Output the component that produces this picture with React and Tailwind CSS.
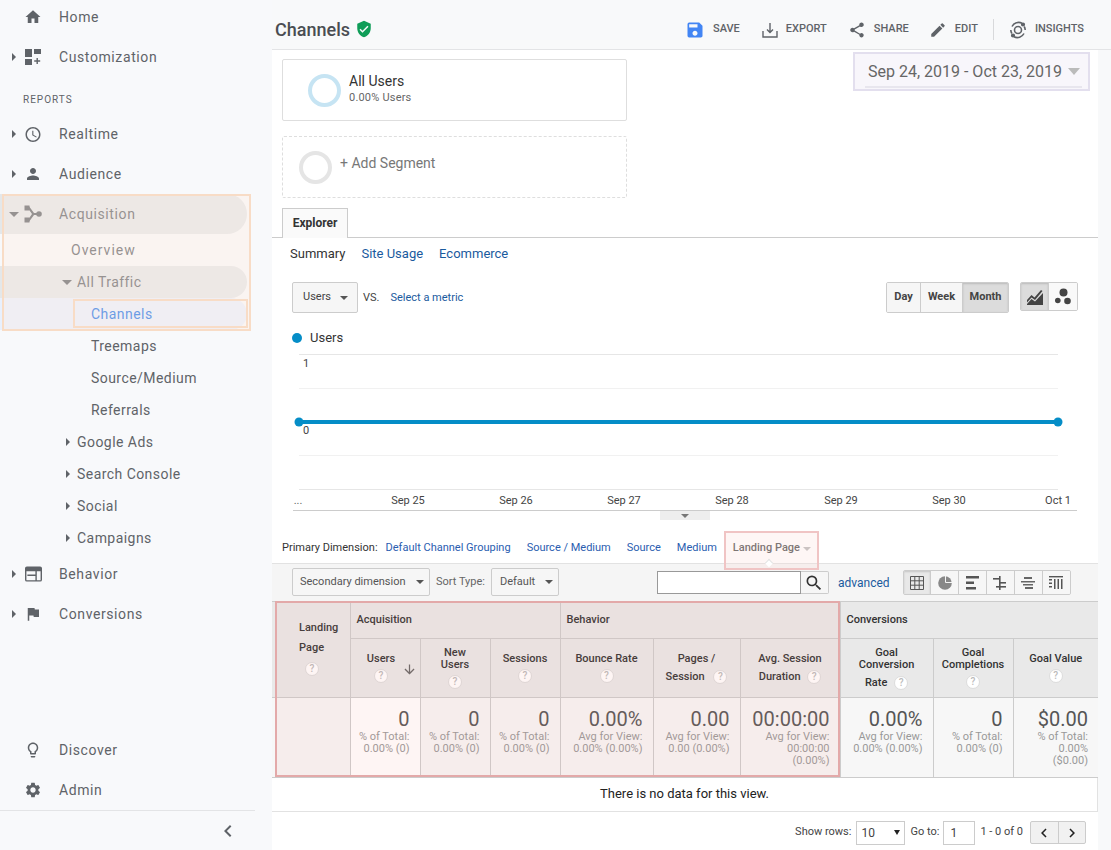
import {
  MdHome, MdAccessTime, MdPerson, MdSave, MdShare, MdEdit, MdFlag, MdSettings,
  MdLightbulbOutline, MdVerifiedUser, MdChevronLeft, MdSearch, MdArrowDownward,
} from 'react-icons/md'

function Caret({ open, className = '' }) {
  if (open) return <span className={`block h-0 w-0 border-x-[5px] border-t-[5px] border-x-transparent border-t-[#5f6368] ${className}`} />
  return <span className={`block h-0 w-0 border-y-[4px] border-l-[4px] border-y-transparent border-l-[#5f6368] ${className}`} />
}

function DashIcon() {
  return (
    <svg viewBox="0 0 16 16" className="h-4 w-4 fill-[#5f6368]">
      <rect x="0" y="0" width="7" height="8" /><rect x="9" y="0" width="7" height="5" />
      <rect x="0" y="10" width="7" height="6" /><path d="M11.5 9h1.4v2.3h2.3v1.4h-2.3V15h-1.4v-2.3H9.2v-1.4h2.3z" />
    </svg>
  )
}

function AcqIcon() {
  return (
    <svg viewBox="0 0 18 18" className="h-[18px] w-[18px] fill-[#5f6368]">
      <rect x="0.500" y="0.500" width="5" height="5" /><rect x="0.500" y="12.500" width="5" height="5" /><circle cx="15" cy="9" r="2.800" />
      <path d="M3.500 2.500l1.500-1.200L10 8h4v2h-4l-5 6.700-1.500-1.200L8 9z" />
    </svg>
  )
}

function BehaviorIcon() {
  return (
    <svg viewBox="0 0 18 16" className="h-4 w-[17px]">
      <path fillRule="evenodd" className="fill-[#5f6368]" d="M2 0h14a2 2 0 0 1 2 2v12a2 2 0 0 1-2 2H2a2 2 0 0 1-2-2V2a2 2 0 0 1 2-2zM1.500 5v9.500h9.500V10H2.500V8.500H11V5zM12.500 5v9.500h4V5z" />
    </svg>
  )
}

function NavItem({ icon, label, arrow, open }) {
  return (
    <div className="flex h-10 items-center">
      <span className="flex w-[24px] justify-center pl-[3px]">
        {arrow && <Caret open={open} />}
      </span>
      <span className="flex w-[18px] justify-center">{icon}</span>
      <span className="ml-[17px] text-[14px] tracking-[0.6px] text-[#5f6368]">{label}</span>
    </div>
  )
}

function SubItem({ label, indent = 'pl-[91px]', arrow, wide }) {
  return (
    <div className={`flex h-8 items-center ${indent} text-[14px] ${wide ? 'tracking-[1px]' : 'tracking-[0.45px]'} text-[#5f6368]`}>
      {arrow && <Caret className="mr-[7px]" />}
      {label}
    </div>
  )
}

function Sidebar() {
  return (
    <aside className="relative h-[850px] w-[272px] shrink-0 bg-[#f8f9fb]">
      <div className="-mt-[3px] flex h-[813px] flex-col">
        <NavItem icon={<MdHome size={20} color="#5f6368" />} label="Home" />
        <NavItem icon={<DashIcon />} label="Customization" arrow />
        <div className="flex h-[37px] items-center pl-[23px] pt-[7px] text-[10px] tracking-[1px] text-[#5f6368]">REPORTS</div>
        <NavItem icon={<MdAccessTime size={21} color="#5f6368" />} label="Realtime" arrow />
        <NavItem icon={<MdPerson size={20} color="#5f6368" />} label="Audience" arrow />
        <div className="w-[247px] rounded-r-[20px] bg-[#e4e7e9]">
          <NavItem icon={<AcqIcon />} label="Acquisition" arrow open />
        </div>
        <SubItem label="Overview" indent="pl-[71px]" wide />
        <div className="flex h-8 w-[247px] items-center rounded-r-[16px] bg-[#e4e7e9] pl-[62px] text-[14px] tracking-[0.45px] text-[#5f6368]">
          <Caret open className="mr-[5px]" />All Traffic
        </div>
        <div className="flex h-8 w-[247px] items-center rounded-r-[16px] bg-[#e8f0fe] pl-[91px] text-[14px] tracking-[0.45px] text-[#1a73e8]">Channels</div>
        <SubItem label="Treemaps" />
        <SubItem label="Source/Medium" />
        <SubItem label="Referrals" />
        <SubItem label="Google Ads" indent="pl-[66px]" arrow />
        <SubItem label="Search Console" indent="pl-[66px]" arrow />
        <SubItem label="Social" indent="pl-[66px]" arrow />
        <SubItem label="Campaigns" indent="pl-[66px]" arrow />
        <NavItem icon={<BehaviorIcon />} label="Behavior" arrow />
        <NavItem icon={<MdFlag size={20} color="#5f6368" />} label="Conversions" arrow />
        <div className="flex-1" />
        <NavItem icon={<MdLightbulbOutline size={20} color="#5f6368" />} label="Discover" />
        <NavItem icon={<MdSettings size={20} color="#5f6368" />} label="Admin" />
      </div>
      <div className="flex h-10 w-[255px] items-center justify-end border-t border-[#e3e4e6] pr-[15px]">
        <MdChevronLeft size={24} color="#5f6368" />
      </div>
      {/* orange highlight over the active nav group */}
      <div className="absolute left-[2px] top-[194px] h-[137px] w-[249px] border-2 border-[#f8dcc6] bg-[#feece0]/35" />
      <div className="absolute left-[73px] top-[299px] h-[29px] w-[175px] border-2 border-[#f8dcc6]" />
    </aside>
  )
}

function ExportIcon() {
  return (
    <svg viewBox="0 0 16 16" className="h-4 w-4 fill-none stroke-[#5f6368] stroke-[1.4]">
      <path d="M1 9v6h14V9M8 1v9M5 7.500l3 3 3-3" />
    </svg>
  )
}

function InsightsIcon() {
  return (
    <svg viewBox="0 0 18 18" className="h-[18px] w-[18px] fill-none stroke-[#5f6368] stroke-[1.6]">
      <path d="M3 5.500A7.500 7.500 0 0 1 13 2.200M15 12.500A7.500 7.500 0 0 1 5 15.800M1.800 9a7.500 7.500 0 0 0 1 3.500M16.200 9a7.500 7.500 0 0 0-1-3.500" />
      <circle cx="9" cy="9" r="3.500" />
      <circle cx="14" cy="3.500" r="1.300" className="fill-[#5f6368]" /><circle cx="4" cy="14.500" r="1.300" className="fill-[#5f6368]" />
    </svg>
  )
}

function HeaderAction({ icon, label, className }) {
  return (
    <span className={`flex items-center ${className}`}>
      {icon}
      <span className="ml-[8px] text-[11px] font-medium text-[#5f6368]">{label}</span>
    </span>
  )
}

function Header() {
  return (
    <header className="flex h-[50px] items-center border-b border-[#e3e4e6] bg-[#f8f9fa] pl-[3px] pt-[9px]">
      <h1 className="text-[18px] font-medium text-[#4a4d52]">Channels</h1>
      <MdVerifiedUser size={18} color="#0f9d58" className="ml-[5px]" />
      <div className="ml-auto flex items-center pr-[27px] pt-[1px]">
        <HeaderAction icon={<MdSave size={20} color="#4285f4" />} label="SAVE" />
        <HeaderAction icon={<ExportIcon />} label="EXPORT" className="ml-[22px]" />
        <HeaderAction icon={<MdShare size={18} color="#5f6368" />} label="SHARE" className="ml-[21px]" />
        <HeaderAction icon={<MdEdit size={18} color="#5f6368" />} label="EDIT" className="ml-[20px]" />
        <span className="mx-[15px] h-[21px] w-px bg-[#d8d9db]" />
        <HeaderAction icon={<InsightsIcon />} label="INSIGHTS" />
      </div>
    </header>
  )
}

function Segments() {
  return (
    <div className="relative h-[158px] pl-[10px] pt-[9px]">
      <div className="flex h-[62px] w-[345px] items-start rounded-[2px] border border-[#dedede] pl-[25px]">
        <span className="mt-[14px] h-[33px] w-[33px] rounded-full border-[4px] border-[#c6e4f3]" />
        <div className="ml-[8px] mt-[13px]">
          <div className="text-[14px] leading-[16px] text-[#333]">All Users</div>
          <div className="mt-px text-[11px] leading-[16px] tracking-[0.2px] text-[#666]">0.00% Users</div>
        </div>
      </div>
      <div className="mt-[15px] flex h-[62px] w-[345px] items-start rounded-[2px] border border-dashed border-[#dedede] pl-[16px]">
        <span className="mt-[14px] h-[33px] w-[33px] rounded-full border-[4px] border-[#e5e5e5]" />
        <span className="ml-[8px] mt-[17px] text-[14px] leading-[18px] text-[#777]">+ Add Segment</span>
      </div>
      <div className="absolute right-[8px] top-[2px] flex h-[39px] w-[237px] items-center border-2 border-[#e3dfee] bg-[#f8f6fb] pl-[13px]">
        <span className="text-[16px] text-[#666]">Sep 24, 2019 - Oct 23, 2019</span>
        <span className="ml-[6px] h-0 w-0 border-x-[6px] border-t-[7px] border-x-transparent border-t-[#bbb]" />
        <span className="absolute bottom-[1px] left-[10px] right-[6px] h-[2px] bg-[#e8e6ee]" />
      </div>
    </div>
  )
}

function Tabs() {
  return (
    <>
      <div className="h-[30px] border-b border-[#ccc] pl-[10px]">
        <div className="flex h-[30px] w-[66px] items-center justify-center border border-b-0 border-[#ccc] bg-[#fafafa] pb-[2px] text-[12px] font-bold text-[#333]">Explorer</div>
      </div>
      <div className="flex h-[32px] items-center gap-[16px] pl-[18px] text-[13px]">
        <span className="text-[#333]">Summary</span>
        <span className="text-[#1a5a9e]">Site Usage</span>
        <span className="text-[#1a5a9e]">Ecommerce</span>
      </div>
    </>
  )
}

function SegBtn({ label, active, className = '' }) {
  return (
    <span className={`flex h-full items-center justify-center text-[11px] font-bold text-[#444] ${active ? 'bg-[#dcdcdc] shadow-[inset_0_1px_2px_rgba(0,0,0,0.15)]' : 'bg-[#f6f6f6]'} ${className}`}>{label}</span>
  )
}

function ChartControls() {
  return (
    <div className="mt-[12px] flex h-[31px] items-start pl-[20px] pr-[20px]">
      <span className="flex h-[31px] w-[66px] items-center rounded-[2px] border border-[#ccc] bg-[#f6f6f6] pl-[10px] text-[11px] text-[#444]">
        Users<span className="ml-[9px] h-0 w-0 border-x-[4px] border-t-[4px] border-x-transparent border-t-[#555]" />
      </span>
      <span className="ml-[5px] mt-[8px] text-[11px] text-[#444]">VS.</span>
      <span className="ml-[11px] mt-[8px] text-[11px] text-[#1a5a9e]">Select a metric</span>
      <div className="ml-auto flex h-[31px] overflow-hidden rounded-[2px] border border-[#ccc]">
        <SegBtn label="Day" className="w-[34px] border-r border-[#ccc]" />
        <SegBtn label="Week" className="w-[42px] border-r border-[#ccc]" />
        <SegBtn label="Month" active className="w-[45px]" />
      </div>
      <div className="ml-[11px] flex h-[29px] w-[58px] overflow-hidden rounded-[2px] border border-[#ccc]">
        <span className="flex w-[28px] items-center justify-center border-r border-[#ccc] bg-[#dcdcdc] shadow-[inset_0_1px_2px_rgba(0,0,0,0.15)]">
          <svg viewBox="0 0 16 16" className="h-4 w-4 fill-[#444]"><path d="M0 11l4.500-5 3 2.500L14 1l1.500 1L8 11 4.500 8.500 0 13.500zM0 16v-1l4.500-5 3.500 2.500 8-8.500v12z" /></svg>
        </span>
        <span className="flex flex-1 items-center justify-center bg-[#f9f9f9]">
          <svg viewBox="0 0 18 18" className="h-[18px] w-[18px] fill-[#444]"><circle cx="9.500" cy="4.500" r="4" /><circle cx="3.800" cy="12.500" r="2.800" /><circle cx="13.500" cy="13" r="3.300" /></svg>
        </span>
      </div>
    </div>
  )
}

const dateTicks = [
  [408, 'Sep 25'], [516, 'Sep 26'], [624, 'Sep 27'], [732, 'Sep 28'], [841, 'Sep 29'], [949, 'Sep 30'], [1058, 'Oct 1'],
]

function Chart() {
  return (
    <div>
      <div className="mt-[17px] flex h-[16px] items-center pl-[20px]">
        <span className="h-[10px] w-[10px] rounded-full bg-[#058dc7]" />
        <span className="ml-[8px] text-[13px] text-[#333]">Users</span>
      </div>
      {/* x of the svg is page x - 272, y is page y - 346 */}
      <svg viewBox="0 0 826 164" className="block h-[164px] w-[826px] font-['Roboto',sans-serif]">
        {[8, 42, 109, 143].map((y) => (
          <line key={y} x1="27" x2="786" y1={y + 0.5} y2={y + 0.5} stroke={y === 143 || y === 8 ? '#e6e6e6' : '#f1f1f1'} />
        ))}
        <line x1="27" x2="786" y1="76" y2="76" stroke="#058dc7" strokeWidth="4" />
        <circle cx="27" cy="76" r="4.500" fill="#058dc7" />
        <circle cx="786" cy="76" r="4.500" fill="#058dc7" />
        <text x="31" y="21" fontSize="11" fill="#444">1</text>
        <text x="31" y="88" fontSize="11" fill="#444">0</text>
        <text x="26" y="158" fontSize="11" fill="#666" textAnchor="middle">...</text>
        {dateTicks.map(([x, label]) => (
          <text key={label} x={x - 272} y="158" fontSize="11" fill="#444" textAnchor="middle">{label}</text>
        ))}
      </svg>
      <div className="ml-[21px] h-px w-[784px] bg-[#ccc]" />
      <div className="ml-[388px] flex h-[9px] w-[50px] items-center justify-center bg-[#eee]">
        <span className="h-0 w-0 border-x-[4px] border-t-[4px] border-x-transparent border-t-[#777]" />
      </div>
    </div>
  )
}

function PrimaryDimension() {
  return (
    <div className="relative flex h-[43px] items-center pl-[10px] pt-[14px] text-[11px]">
      <span className="text-[#333]">Primary Dimension:</span>
      <span className="ml-[8px] text-[#2a5db0]">Default Channel Grouping</span>
      <span className="ml-[16px] text-[#2a5db0]">Source / Medium</span>
      <span className="ml-[16px] text-[#2a5db0]">Source</span>
      <span className="ml-[16px] text-[#2a5db0]">Medium</span>
      <span className="ml-[16px] font-medium text-[#555]">Landing Page</span>
      <span className="ml-[3px] h-0 w-0 border-x-[4px] border-t-[4px] border-x-transparent border-t-[#bbb]" />
      <span className="absolute left-[452px] top-[11px] h-[39px] w-[95px] border-2 border-[#f0c4c4] bg-[#fbdcd8]/25" />
      {/* small notch pointing at the selected dimension */}
      <span className="absolute bottom-0 left-[494px] h-[6px] w-[6px] translate-y-[3px] rotate-45 border-l border-t border-[#e2e2e2] bg-white" />
    </div>
  )
}

const viewIcons = [
  <svg key="grid" viewBox="0 0 14 14" className="h-[14px] w-[14px] fill-none stroke-[#555]"><path d="M.5.5h13v13H.5zM.5 4.800h13M.5 9.200h13M4.800.5v13M9.200.5v13" /></svg>,
  <svg key="pie" viewBox="0 0 14 14" className="h-[14px] w-[14px]"><circle cx="7" cy="7" r="6.800" fill="#888" /><path d="M7.500 0v6.500H14" fill="none" stroke="#f5f5f5" /></svg>,
  <svg key="bar" viewBox="0 0 14 14" className="h-[14px] w-[14px] fill-[#555]"><rect y="0" width="13" height="2.500" /><rect y="5.500" width="8" height="2.500" /><rect y="11" width="10" height="2.500" /></svg>,
  <svg key="cmp" viewBox="0 0 14 14" className="h-[14px] w-[14px] fill-[#555]"><rect x="0" y="2" width="7" height="1.600" /><rect x="6" y="0" width="1.600" height="14" /><rect x="6" y="6" width="7" height="1.600" /><rect x="3" y="10" width="10" height="1.600" /></svg>,
  <svg key="term" viewBox="0 0 14 14" className="h-[14px] w-[14px] fill-[#666]"><rect x="3" y="1" width="8" height="2" /><rect x="0" y="5" width="14" height="1.500" /><rect x="2" y="8" width="10" height="1.500" /><rect x="4" y="11" width="8" height="2" /></svg>,
  <svg key="pivot" viewBox="0 0 14 14" className="h-[14px] w-[14px] fill-[#555]"><rect y="0" width="14" height="1.400" /><rect y="3" width="3" height="1.500" /><rect y="6.500" width="3" height="1.500" /><rect y="10" width="3" height="1.500" /><rect x="5" y="3" width="1.500" height="10" /><rect x="8.500" y="3" width="1.500" height="10" /><rect x="12" y="3" width="1.500" height="10" /></svg>,
]

function Toolbar() {
  return (
    <div className="flex h-[38px] items-start border-t border-[#e2e2e2] bg-[#f5f5f5] pl-[20px] pt-[4px] text-[11px]">
      <span className="flex h-[28px] w-[138px] items-center rounded-[2px] border border-[#ccc] bg-[#f6f6f6] pl-[7px] text-[#555]">
        Secondary dimension<span className="ml-[10px] h-0 w-0 border-x-[4px] border-t-[4px] border-x-transparent border-t-[#555]" />
      </span>
      <span className="ml-[6px] mt-[6px] text-[#666]">Sort Type:</span>
      <span className="ml-[6px] flex h-[28px] w-[68px] items-center rounded-[2px] border border-[#ccc] bg-[#f6f6f6] pl-[8px] text-[#555]">
        Default<span className="ml-[10px] h-0 w-0 border-x-[4px] border-t-[4px] border-x-transparent border-t-[#555]" />
      </span>
      <span className="ml-[98px] mt-[3px] h-[23px] w-[144px] border border-[#999] bg-white" />
      <span className="mt-[3px] flex h-[23px] w-[28px] items-center justify-center rounded-r-[2px] border border-l-0 border-[#ccc] bg-[#f6f6f6]">
        <MdSearch size={20} color="#333" />
      </span>
      <span className="ml-[9px] mt-[6px] text-[12px] text-[#1a5a9e]">advanced</span>
      <div className="ml-[13px] mt-[2px] flex h-[25px] w-[168px] overflow-hidden rounded-[2px] border border-[#ccc]">
        {viewIcons.map((icon, i) => (
          <span key={i} className={`flex flex-1 items-center justify-center border-r border-[#ccc] last:border-r-0 ${i === 0 ? 'bg-[#e8e8e8] shadow-[inset_0_1px_2px_rgba(0,0,0,0.15)]' : 'bg-[#f6f6f6]'}`}>{icon}</span>
        ))}
      </div>
    </div>
  )
}

function Help({ className = '' }) {
  return (
    <span className={`inline-flex h-[14px] w-[14px] items-center justify-center rounded-full border border-[#dcdcdc] bg-white text-[10px] font-medium leading-none text-[#bbb] ${className}`}>?</span>
  )
}

function HeadCell({ children, width }) {
  return (
    <th className={`border-l border-[#ccc] px-[4px] align-top text-[11px] font-medium text-[#333] ${width || ''}`}>
      {children}
    </th>
  )
}

function DataCell({ value, lines, white }) {
  return (
    <td className={`border-l border-[#ccc] pr-[10px] pt-[9px] text-right align-top ${white ? 'bg-white' : 'bg-[#f7f7f7]'}`}>
      <div className="text-[20px] leading-[24px] text-[#555]">{value}</div>
      {lines.map((line) => (
        <div key={line} className="text-[11px] leading-[12px] text-[#999]">{line}</div>
      ))}
    </td>
  )
}

function DataTable() {
  return (
    <table className="w-[826px] table-fixed border-collapse">
      <colgroup>
        <col className="w-[78px]" /><col className="w-[70px]" /><col className="w-[70px]" /><col className="w-[70px]" />
        <col className="w-[93px]" /><col className="w-[87px]" /><col className="w-[100px]" /><col className="w-[93px]" />
        <col className="w-[80px]" /><col className="w-[85px]" />
      </colgroup>
      <thead className="bg-[#e9e9e9]">
        <tr className="h-[37px] border-t border-[#ccc]">
          <th rowSpan={2} className="pl-[27px] text-left align-top text-[11px] font-medium leading-[20px] text-[#333]">
            <div className="pt-[16px]">Landing<br />Page</div>
            <div className="ml-[6px] mt-[4px] leading-none"><Help /></div>
          </th>
          <th colSpan={3} className="border-l border-[#ccc] pl-[6px] text-left text-[11px] font-medium text-[#333]">Acquisition</th>
          <th colSpan={3} className="border-l border-[#ccc] pl-[6px] text-left text-[11px] font-medium text-[#333]">Behavior</th>
          <th colSpan={3} className="border-l border-[#ccc] pl-[6px] text-left text-[11px] font-medium text-[#333]">Conversions</th>
        </tr>
        <tr className="h-[59px] border-t border-[#ccc]">
          <HeadCell>
            <div className="relative pt-[13px] pr-[8px] leading-[13px]">Users<div className="mt-[4px] leading-none"><Help /></div>
              <MdArrowDownward size={15} color="#666" className="absolute right-[-1px] top-[23px]" />
            </div>
          </HeadCell>
          <HeadCell><div className="pt-[8px] leading-[12px]">New<br />Users<div className="mt-[4px] leading-none"><Help /></div></div></HeadCell>
          <HeadCell><div className="pt-[13px] leading-[13px]">Sessions<div className="mt-[4px] leading-none"><Help /></div></div></HeadCell>
          <HeadCell><div className="pt-[13px] leading-[13px]">Bounce Rate<div className="mt-[4px] leading-none"><Help /></div></div></HeadCell>
          <HeadCell><div className="pt-[11px] leading-[18px]">Pages /<br />Session <Help className="ml-[6px]" /></div></HeadCell>
          <HeadCell><div className="pt-[11px] leading-[18px]">Avg. Session<br />Duration <Help className="ml-[4px]" /></div></HeadCell>
          <HeadCell><div className="pt-[8px] leading-[12px]">Goal<br />Conversion<div className="mt-[5px] leading-[14px]">Rate <Help className="ml-[4px]" /></div></div></HeadCell>
          <HeadCell><div className="pt-[8px] leading-[12px]">Goal<br />Completions<div className="mt-[4px] leading-none"><Help /></div></div></HeadCell>
          <HeadCell><div className="pt-[13px] leading-[13px]">Goal Value<div className="mt-[4px] leading-none"><Help /></div></div></HeadCell>
        </tr>
      </thead>
      <tbody>
        <tr className="h-[80px] border-y border-[#ccc]">
          <td className="bg-[#f7f7f7]" />
          <DataCell white value="0" lines={['% of Total:', '0.00% (0)']} />
          <DataCell value="0" lines={['% of Total:', '0.00% (0)']} />
          <DataCell value="0" lines={['% of Total:', '0.00% (0)']} />
          <DataCell value="0.00%" lines={['Avg for View:', '0.00% (0.00%)']} />
          <DataCell value="0.00" lines={['Avg for View:', '0.00 (0.00%)']} />
          <DataCell value="00:00:00" lines={['Avg for View:', '00:00:00', '(0.00%)']} />
          <DataCell value="0.00%" lines={['Avg for View:', '0.00% (0.00%)']} />
          <DataCell value="0" lines={['% of Total:', '0.00% (0)']} />
          <DataCell value="$0.00" lines={['% of Total:', '0.00%', '($0.00)']} />
        </tr>
      </tbody>
    </table>
  )
}

function Pagination() {
  return (
    <div className="flex h-[39px] items-center justify-end pr-[12px] pt-[2px] text-[11px] text-[#444]">
      <span>Show rows:</span>
      <span className="ml-[5px] flex h-[24px] w-[49px] items-center justify-between border border-[#ccc] bg-white px-[4px] text-[12px]">
        10<span className="h-0 w-0 border-x-[3px] border-t-[5px] border-x-transparent border-t-[#222]" />
      </span>
      <span className="ml-[5px]">Go to:</span>
      <span className="ml-[4px] flex h-[24px] w-[32px] items-center border border-[#ccc] bg-white pl-[6px] text-[12px]">1</span>
      <span className="ml-[5px]">1 - 0 of 0</span>
      <span className="ml-[7px] flex h-[23px] w-[56px] overflow-hidden rounded-[2px] border border-[#ccc] bg-[#f1f1f1]">
        <span className="flex flex-1 items-center justify-center border-r border-[#ccc]"><MdChevronLeft size={18} color="#222" /></span>
        <span className="flex flex-1 items-center justify-center"><MdChevronLeft size={18} color="#222" className="rotate-180" /></span>
      </span>
    </div>
  )
}

export default function App() {
  return (
    <div className="flex h-[850px] w-[1111px] overflow-hidden bg-[#f8f9fa] font-['Roboto',sans-serif]">
      <Sidebar />
      <main className="h-[850px] w-[839px] shrink-0">
        <Header />
        <div className="w-[826px] bg-white">
          <Segments />
          <Tabs />
          <ChartControls />
          <Chart />
          <PrimaryDimension />
          <Toolbar />
          <div className="relative">
            <DataTable />
            {/* red highlight over landing page, acquisition and behavior */}
            <div className="absolute left-[3px] top-0 h-[176px] w-[565px] border-2 border-[#e3a9a9] bg-[#f79d93]/10" />
            <div className="flex h-[34px] items-center justify-center border-b border-r border-[#e2e2e2] pb-px text-[13px] text-[#222]">There is no data for this view.</div>
            <Pagination />
          </div>
        </div>
      </main>
    </div>
  )
}
